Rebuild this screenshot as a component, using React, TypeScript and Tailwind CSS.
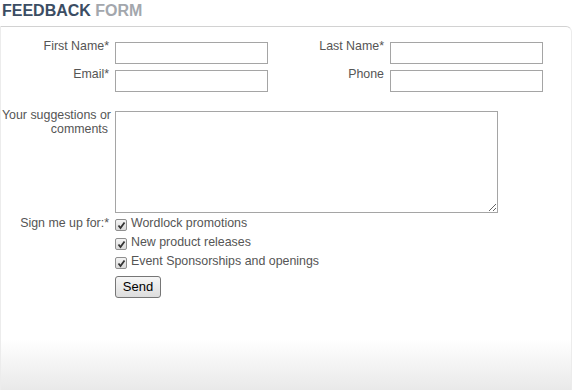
import { useState } from "react";

const signups = ["Wordlock promotions", "New product releases", "Event Sponsorships and openings"];

function Check({ checked, onClick }: { checked: boolean; onClick: () => void }) {
    return (
        <button
            type="button"
            onClick={onClick}
            className="mt-[3px] w-[12px] h-[12px] border border-[#8f8f8f] rounded-[2px] bg-gradient-to-b from-[#f4f4f4] to-[#d9d9d9] flex items-center justify-center shrink-0"
        >
            {checked && (
                <svg width="9" height="9" viewBox="0 0 9 9">
                    <path d="M1.5 4.5 L3.5 7 L7.5 1.5" fill="none" stroke="#333" strokeWidth="1.8" />
                </svg>
            )}
        </button>
    );
}

export default function App() {
    const [checks, setChecks] = useState([true, true, true]);

    const toggle = (i: number) => setChecks(checks.map((c, j) => (j === i ? !c : c)));

    return (
        <div className="w-[572px] h-[390px] bg-white flex flex-col text-[12.4px] leading-[14px] text-[#555]" style={{ fontFamily: '"Liberation Sans", Arial, sans-serif' }}>
            {/* header */}
            <div className="h-[26px] pt-[2px] pl-[2px] text-[16px] leading-[18px] font-bold">
                <span className="text-[#3b4d63]">FEEDBACK</span> <span className="text-[#a3a7ad]">FORM</span>
            </div>

            {/* panel */}
            <div className="flex-1 border-t border-x border-t-[#d2d2d2] border-x-[#ececec] rounded-tr-[6px] bg-gradient-to-b from-white from-[86%] to-[#e9e9e9] pt-[12px] flex flex-col">
                <div className="flex">
                    <label className="w-[108px] text-right">First Name*</label>
                    <input className="ml-[6px] mt-[3px] w-[153px] h-[22px] border border-[#a5a5a5] outline-none px-1" />
                    <label className="w-[116px] text-right">Last Name*</label>
                    <input className="ml-[6px] mt-[3px] w-[153px] h-[22px] border border-[#a5a5a5] outline-none px-1" />
                </div>
                <div className="flex mt-[3px]">
                    <label className="w-[108px] text-right">Email*</label>
                    <input className="ml-[6px] mt-[3px] w-[153px] h-[22px] border border-[#a5a5a5] outline-none px-1" />
                    <label className="w-[116px] text-right">Phone</label>
                    <input className="ml-[6px] mt-[3px] w-[153px] h-[22px] border border-[#a5a5a5] outline-none px-1" />
                </div>

                <div className="flex mt-[16px]">
                    <label className="w-[111px] text-right -ml-[1px] whitespace-nowrap">
                        <span className="block">Your suggestions or</span>
                        <span className="block pr-[3px]">comments</span>
                    </label>
                    <textarea className="ml-[4px] mt-[3px] w-[383px] h-[102px] border border-[#a5a5a5] outline-none resize" />
                </div>

                <div className="flex mt-[2px]">
                    <label className="w-[108px] text-right pt-[1px]">Sign me up for:*</label>
                    <div className="ml-[6px] flex flex-col">
                        {signups.map((s, i) => (
                            <div key={s} className="flex h-[19px] pt-[1px]">
                                <Check checked={checks[i]} onClick={() => toggle(i)} />
                                <span className="ml-[4px]">{s}</span>
                            </div>
                        ))}
                        <button className="mt-[4px] w-[46px] h-[22px] border border-[#767676] rounded-[3px] bg-gradient-to-b from-[#f6f6f6] to-[#dddddd] text-black text-[13px] leading-[20px]">
                            Send
                        </button>
                    </div>
                </div>
            </div>
        </div>
    );
}
